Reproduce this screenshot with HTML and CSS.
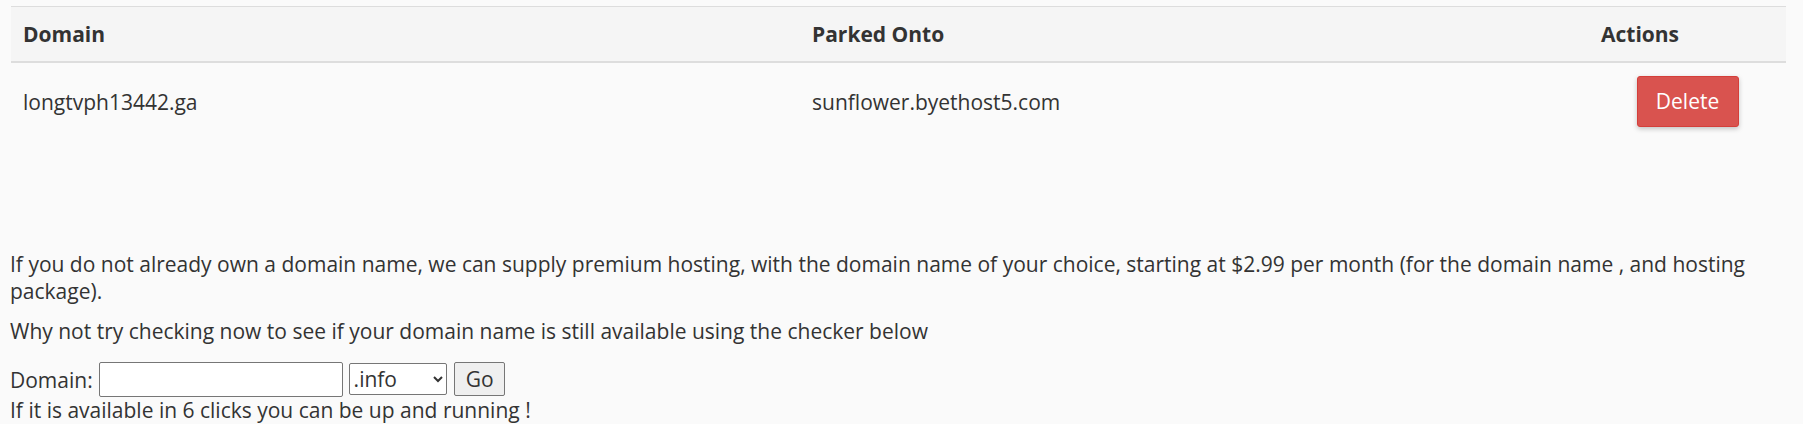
FILE: index.html
```html
<!DOCTYPE html>
<html lang="en">
<head>
<meta charset="utf-8">
<title>Parked Domains</title>
<link rel="stylesheet" href="styles.css">
</head>
<body>
<div class="page">
  <table class="domains">
    <colgroup>
      <col class="col-domain">
      <col class="col-parked">
      <col class="col-actions">
    </colgroup>
    <thead>
      <tr>
        <th>Domain</th>
        <th>Parked Onto</th>
        <th>Actions</th>
      </tr>
    </thead>
    <tbody>
      <tr>
        <td>longtvph13442.ga</td>
        <td>sunflower.byethost5.com</td>
        <td class="actions"><button class="btn-delete" type="button">Delete</button></td>
      </tr>
    </tbody>
  </table>

  <div class="info">
    <p>If you do not already own a domain name, we can supply premium hosting, with the domain name of your choice, starting at $2.99 per month (for the domain name , and hosting package).</p>
    <p>Why not try checking now to see if your domain name is still available using the checker below</p>
    <form class="checker">
      Domain: <input class="domain-input" type="text"> <select class="tld"><option>.info</option><option>.com</option><option>.net</option><option>.org</option></select> <button class="go" type="button">Go</button><br>
      If it is available in 6 clicks you can be up and running !
    </form>
  </div>
</div>
</body>
</html>
```

FILE: styles.css
```css
html, body {
  margin: 0;
  padding: 0;
}

body {
  background: #fafafa;
  color: #333;
  font-family: "Open Sans", "Liberation Sans", sans-serif;
  font-size: 21px;
  line-height: 26.6px;
}

.page {
  padding: 6px 17px 0 10px;
}

.domains {
  width: 1775px;
  margin-left: 1px;
  border-collapse: collapse;
  border-top: 1px solid #ddd;
  table-layout: fixed;
}

.col-domain { width: 789px; }
.col-parked { width: 789px; }
.col-actions { width: 197px; }

.domains th {
  background: #f5f5f5;
  text-align: left;
  font-weight: 700;
  line-height: 28px;
  padding: 13px 12px;
  border-bottom: 2px solid #ddd;
}

.domains td {
  padding: 13px 12px;
  line-height: 28px;
  vertical-align: middle;
}

.domains td.actions {
  text-align: center;
}

.btn-delete {
  font-family: inherit;
  font-size: 21px;
  line-height: 28.6px;
  color: #fff;
  background: #d9534f;
  border: 1px solid #d43f3a;
  border-radius: 3px;
  padding: 10px 0;
  width: 102px;
  height: 51px;
  box-shadow: 0 2px 5px rgba(0, 0, 0, 0.22);
  cursor: pointer;
}

.info {
  margin-top: 111px;
}

.info p {
  margin: 0 0 14px;
}

.checker {
  margin-top: 17px;
}

.domain-input {
  box-sizing: border-box;
  width: 244px;
  height: 35px;
  border: 1px solid #767676;
  border-radius: 2px;
  background: #fff;
  font-family: inherit;
  font-size: 21px;
  padding: 1px 4px;
  margin: 0 0 0 1px;
}

.tld {
  box-sizing: border-box;
  width: 98px;
  height: 32px;
  border: 1px solid #767676;
  border-radius: 2px;
  background: #fff;
  color: #333;
  font-family: inherit;
  font-size: 21px;
  margin: 0;
}

.go {
  box-sizing: border-box;
  width: 51px;
  height: 34px;
  border: 1px solid #767676;
  border-radius: 2px;
  background: #efefef;
  color: #333;
  font-family: inherit;
  font-size: 21px;
  padding: 0;
  margin: 0 0 0 2px;
}
```
